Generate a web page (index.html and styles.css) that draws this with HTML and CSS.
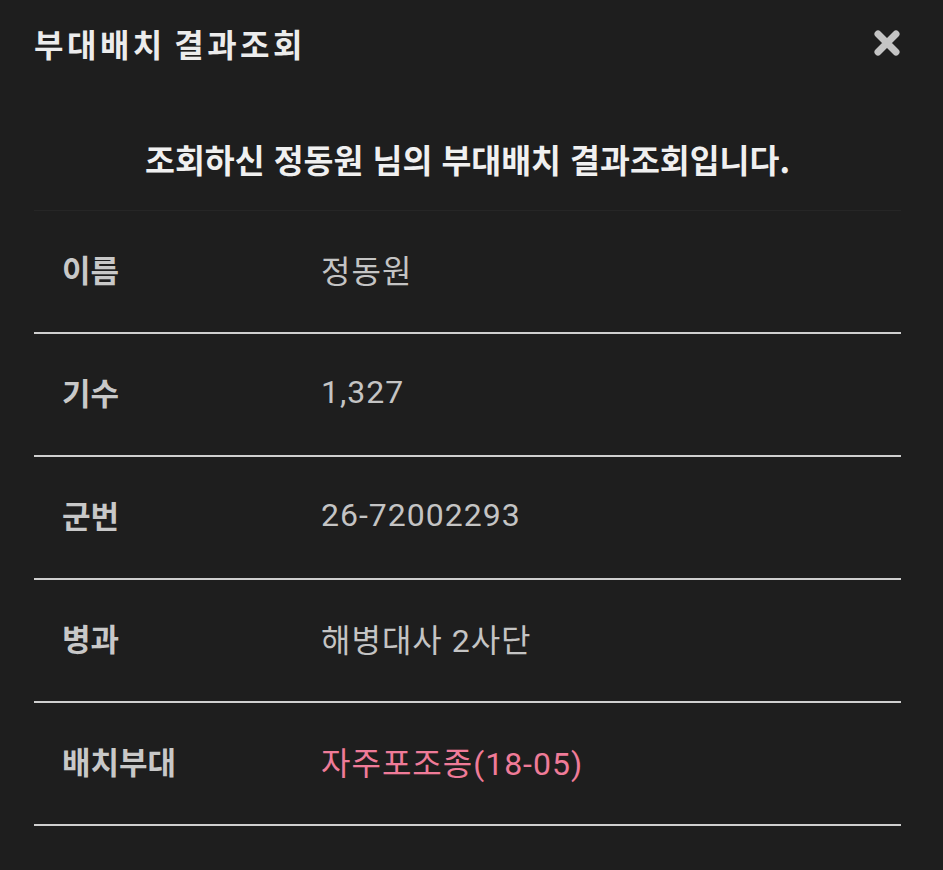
FILE: index.html
```html
<!DOCTYPE html>
<html lang="ko">
<head>
<meta charset="utf-8">
<link rel="stylesheet" href="styles.css">
</head>
<body>
<div class="modal">
  <div class="header">
    <h1 class="title">부대배치 결과조회</h1>
    <button class="close" aria-label="닫기">
      <svg width="28" height="28" viewBox="0 0 28 28"><path d="M5 5 L23 23 M23 5 L5 23" stroke="#c4c4c4" stroke-width="7" stroke-linecap="round"/></svg>
    </button>
  </div>
  <p class="intro">조회하신 정동원 님의 부대배치 결과조회입니다.</p>
  <div class="table">
    <div class="row"><div class="label">이름</div><div class="value">정동원</div></div>
    <div class="row"><div class="label">기수</div><div class="value">1,327</div></div>
    <div class="row"><div class="label">군번</div><div class="value">26-72002293</div></div>
    <div class="row"><div class="label">병과</div><div class="value">해병대사 2사단</div></div>
    <div class="row"><div class="label">배치부대</div><div class="value pink">자주포조종(18-05)</div></div>
  </div>
</div>
</body>
</html>
```
FILE: styles.css
```css
html, body {
  margin: 0;
  padding: 0;
  background: #1e1e1e;
}
body {
  font-family: "Noto Sans CJK KR", "Noto Sans", sans-serif;
  color: #e6e6e6;
  width: 943px;
  height: 870px;
  overflow: hidden;
}
.modal {
  padding: 0 42px 0 34px;
}
.header {
  display: flex;
  align-items: center;
  justify-content: space-between;
  height: 86px;
}
.title {
  margin: 0;
  font-size: 32px;
  font-weight: 700;
  letter-spacing: 3.5px;
  word-spacing: -4px;
  color: #ececec;
  line-height: 1;
}
.close {
  background: none;
  border: 0;
  padding: 0;
  width: 28px;
  height: 28px;
  display: flex;
}
.intro {
  margin: 0;
  box-sizing: border-box;
  height: 124px;
  padding-top: 20px;
  display: flex;
  align-items: center;
  justify-content: center;
  font-size: 32.5px;
  font-weight: 700;
  color: #f0f0f0;
}
.table {
  border-top: 1px solid #262626;
  width: 867px;
}
.row {
  display: flex;
  align-items: center;
  height: 121px;
  border-bottom: 2px solid #cfcfcf;
}
.label {
  box-sizing: border-box;
  width: 287px;
  padding-left: 28px;
  padding-bottom: 6px;
  font-size: 31px;
  font-weight: 700;
  color: #c8c8c8;
}
.value {
  font-family: Roboto, "Noto Sans CJK KR", sans-serif;
  font-size: 32px;
  letter-spacing: 1px;
  color: #c4c4c4;
  padding-bottom: 6px;
}
.pink {
  color: #ef7b98;
}
```
